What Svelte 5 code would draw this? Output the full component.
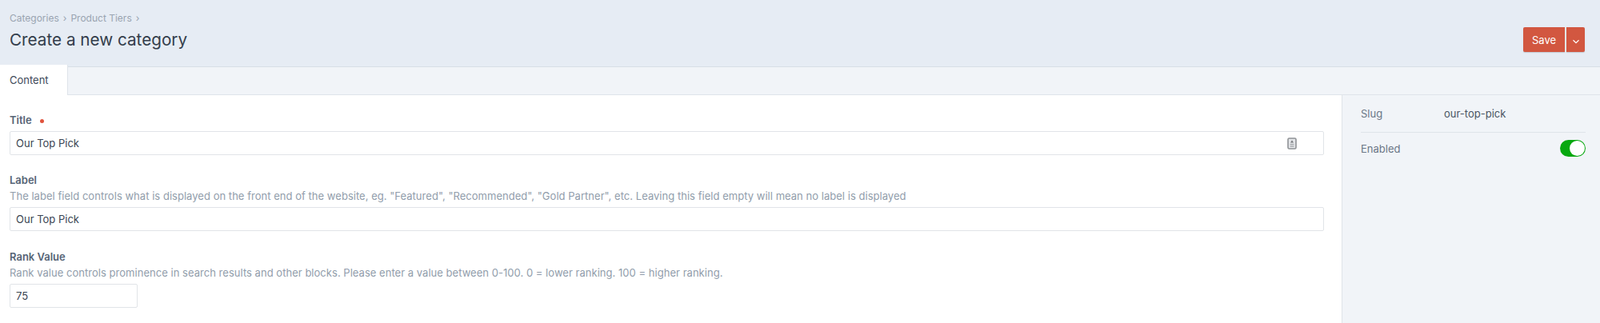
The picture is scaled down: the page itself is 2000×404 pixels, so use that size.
<script>
	let title = $state('Our Top Pick');
	let label = $state('Our Top Pick');
	let rank = $state('75');
</script>

<div class="page">
	<header>
		<div class="heading">
			<nav>
				<a href="#categories">Categories</a><span class="sep">›</span><a href="#tiers">Product Tiers</a><span class="sep">›</span>
			</nav>
			<h1>Create a new category</h1>
		</div>
		<div class="actions">
			<button class="save">Save</button>
			<button class="caret" aria-label="More save options">
				<svg width="10" height="6" viewBox="0 0 10 6"><path d="M1.5 1.2 5 4.6l3.5-3.4" fill="none" stroke="#fff" stroke-width="1.2" /></svg>
			</button>
		</div>
	</header>

	<div class="tabs">
		<div class="tab">Content</div>
	</div>

	<div class="body">
		<main>
			<div class="field first">
				<div class="label">Title <span class="req"></span></div>
				<div class="input">
					<input bind:value={title} />
					<svg class="lock" width="12" height="15" viewBox="0 0 12 15">
						<rect x="1" y="1" width="10" height="13" rx="1.5" fill="#e4e6e9" stroke="#8f9296" stroke-width="1.6" />
						<path d="M6 3.2 8 6.6H4z" fill="#77797d" />
						<path d="M3.6 8.5h4.8M3.6 10.9h4.8" stroke="#9a9da1" stroke-width="1.2" />
					</svg>
				</div>
			</div>
			<div class="field">
				<div class="label">Label</div>
				<div class="help">The label field controls what is displayed on the front end of the website, eg. "Featured", "Recommended", "Gold Partner", etc. Leaving this field empty will mean no label is displayed</div>
				<div class="input"><input bind:value={label} /></div>
			</div>
			<div class="field">
				<div class="label">Rank Value</div>
				<div class="help">Rank value controls prominence in search results and other blocks. Please enter a value between 0-100. 0 = lower ranking. 100 = higher ranking.</div>
				<div class="input short"><input bind:value={rank} /></div>
			</div>
		</main>
		<aside>
			<div class="row slug">
				<span class="key">Slug</span>
				<span class="val">our-top-pick</span>
			</div>
			<div class="row enabled">
				<span class="key">Enabled</span>
				<span class="toggle"><span class="knob"></span></span>
			</div>
		</aside>
	</div>
</div>

<style>
	:global(body) {
		margin: 0;
		background: #f1f4f8;
	}

	.page {
		display: flex;
		flex-direction: column;
		height: 404px;
		overflow: hidden;
		font-family: Inter, "Noto Sans", sans-serif;
		font-size: 13px;
		color: #3e4a59;
	}

	header {
		display: flex;
		justify-content: space-between;
		align-items: flex-start;
		height: 84px;
		box-sizing: border-box;
		padding: 14px 19px 0 12px;
		background: #e6ecf4;
		border-bottom: 1px solid #d8dee6;
	}

	nav {
		display: flex;
		align-items: center;
		height: 16px;
		font-size: 12px;
		color: #9aa4b1;
	}

	nav a {
		color: inherit;
		text-decoration: none;
	}

	.sep {
		margin: 0 5px;
	}

	h1 {
		margin: 7px 0 0;
		font-size: 20.7px;
		line-height: 26px;
		font-weight: 400;
		color: #333d4b;
	}

	.actions {
		display: flex;
		gap: 2px;
		margin-top: 20px;
	}

	.actions button {
		height: 31px;
		border: 0;
		padding: 0;
		background: #d25740;
		color: #fff;
		font: 400 13px Inter, sans-serif;
		box-shadow: 0 1px 1px rgba(60, 70, 85, 0.2);
	}

	.save {
		width: 52px;
		border-radius: 2px 0 0 2px;
	}

	.caret {
		width: 23px;
		border-radius: 0 2px 2px 0;
	}

	.tabs {
		display: flex;
		height: 35px;
		flex: none;
		box-sizing: border-box;
		border-bottom: 1px solid #dfe4ea;
	}

	.tab {
		width: 85px;
		height: 38px;
		margin-top: -3px;
		box-sizing: border-box;
		padding: 3px 0 0 12px;
		line-height: 33px;
		background: #fff;
		border-right: 1px solid #dfe4ea;
		font-size: 13px;
		color: #3e4a59;
		position: relative;
	}

	.body {
		display: flex;
		flex: 1;
	}

	main {
		width: 1678px;
		box-sizing: border-box;
		padding: 23px 22px 0 12px;
		background: #fff;
		border-right: 1px solid #dfe4ea;
	}

	.field {
		margin-top: 24px;
	}

	.field.first {
		margin-top: 0;
	}

	.first .input {
		margin-top: 6px;
	}

	.first + .field {
		margin-top: 23px;
	}

	.label {
		font-size: 13px;
		line-height: 16px;
		font-weight: 600;
		color: #566476;
	}

	.req {
		display: inline-block;
		width: 5px;
		height: 5px;
		margin-left: 7px;
		vertical-align: 1px;
		border-radius: 50%;
		background: #e0533d;
	}

	.help {
		margin-top: 4px;
		margin-bottom: 6px;
		font-size: 13px;
		line-height: 16px;
		letter-spacing: 0.03px;
		color: #919dab;
	}

	.input {
		display: flex;
		align-items: center;
		height: 30px;
		margin-top: 5px;
		box-sizing: border-box;
		border: 1px solid #e1e4e8;
		border-radius: 2px;
		padding: 0 33px 0 7px;
		background: #fff;
	}

	.help + .input {
		margin-top: 0;
	}

	.input.short {
		width: 160px;
	}

	input {
		flex: 1;
		min-width: 0;
		border: 0;
		outline: 0;
		padding: 0;
		background: none;
		font: 13px Inter, sans-serif;
		color: #3a4452;
	}

	.lock {
		flex: none;
	}

	aside {
		width: 281px;
		margin-left: 23px;
		padding-top: 6px;
		font-size: 13px;
	}

	.row {
		display: flex;
		align-items: center;
	}

	.slug {
		height: 41px;
		box-sizing: border-box;
		padding-bottom: 7px;
		border-bottom: 1px solid #dfe4ea;
	}

	.enabled {
		justify-content: space-between;
		height: 39px;
	}

	.key {
		width: 104px;
		color: #6b7786;
	}

	.val {
		color: #4a5563;
	}

	.toggle {
		display: flex;
		justify-content: flex-end;
		box-sizing: border-box;
		width: 32px;
		height: 21px;
		padding: 1px;
		border-radius: 11px;
		background: #07a80f;
	}

	.knob {
		width: 19px;
		height: 19px;
		border-radius: 50%;
		background: #fff;
	}
</style>
